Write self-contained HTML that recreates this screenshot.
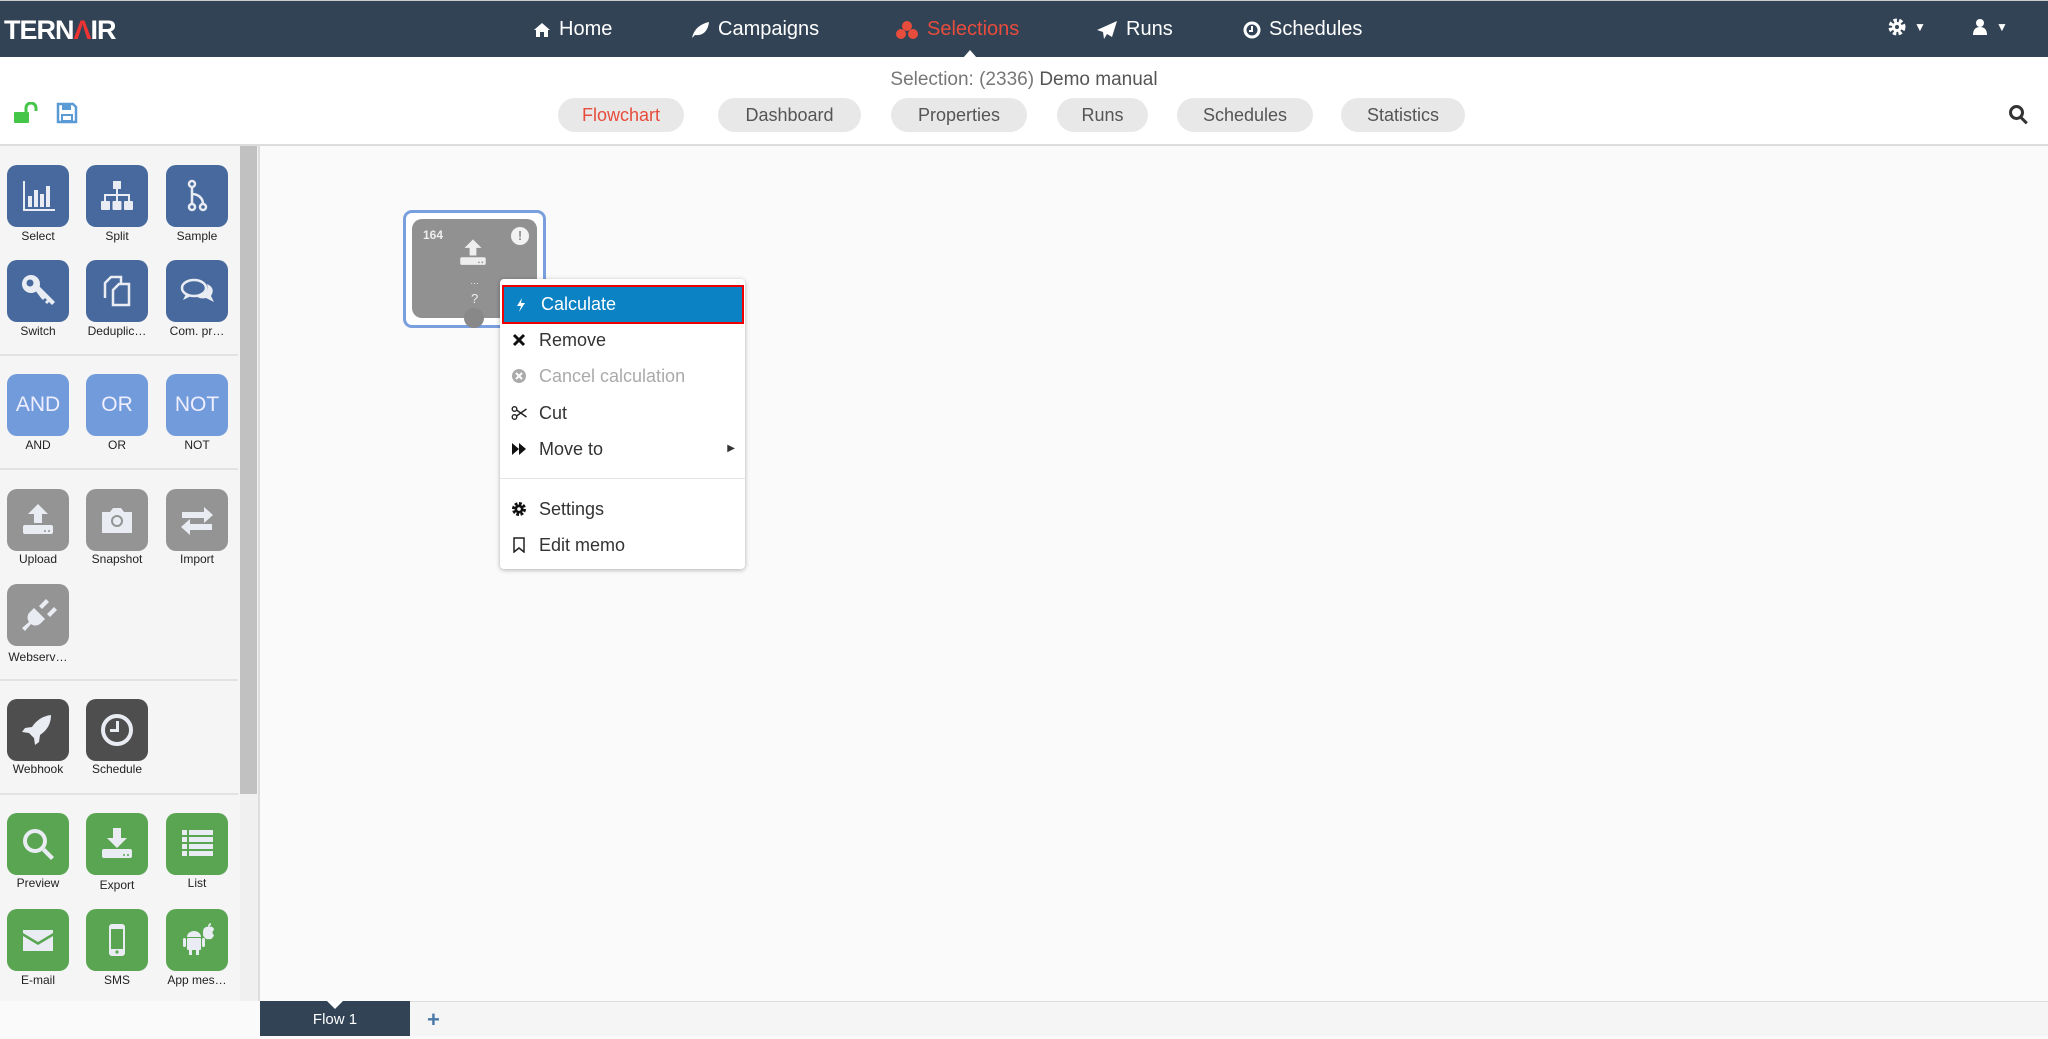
<!DOCTYPE html>
<html><head><meta charset="utf-8"><style>
*{box-sizing:border-box;margin:0;padding:0}
body{width:2048px;height:1036px;overflow:hidden;background:#fafafa;font-family:"Liberation Sans",sans-serif;position:relative}
.nav{position:absolute;left:0;top:0;width:2048px;height:57px;background:#314355;border-top:1px solid #ccc}
.nav .it{position:absolute;top:17px;color:#fff;font-size:20px;display:flex;align-items:center;gap:8px}
.logo{position:absolute;left:4px;top:14px;color:#fff;font-weight:bold;font-size:27px;letter-spacing:-1px}
.sub{position:absolute;left:0;top:57px;width:2048px;height:89px;background:#fff;border-bottom:2px solid #ddd}
.title{position:absolute;top:12px;left:0;width:2048px;text-align:center;font-size:19px;color:#777}
.title b{font-weight:normal;color:#555}
.pill{position:absolute;top:41px;height:34px;border-radius:17px;background:#e8e8e8;color:#555;font-size:18px;line-height:34px;text-align:center}
.side{position:absolute;left:0;top:146px;width:240px;height:855px;background:#f5f5f5}
.track{position:absolute;left:240px;top:146px;width:20px;height:855px;background:#f0f0f0;border-right:2px solid #ddd}
.thumb{position:absolute;left:240px;top:146px;width:17px;height:648px;background:#c1c1c1}
.t{position:absolute;width:62px;height:62px;border-radius:10px;display:flex;align-items:center;justify-content:center;color:#eef;font-size:21px}
.t svg{width:40px;height:40px;fill:#e9edf3;stroke:none}
.l{position:absolute;width:80px;text-align:center;font-size:12px;color:#222}
.sep{position:absolute;left:0;width:238px;height:2px;background:#e2e2e2}
.b{background:#47699d}.lb{background:#729bdb}.g{background:#949494}.d{background:#4e4e4e}.gr{background:#5aa552}
.menu{position:absolute;left:500px;top:279px;width:245px;height:290px;background:#fff;border-radius:4px;box-shadow:0 1px 5px rgba(0,0,0,.3)}
.mi{position:absolute;left:0;width:245px;height:36px;font-size:18px;color:#333;line-height:36px;padding-left:39px}
.mi svg{position:absolute;left:11px;top:10px;width:16px;height:16px}
</style></head><body>
<div class="nav">
<div class="logo">TERN<span style="color:#e33">Λ</span>IR</div>
<div class="it" style="left:533px"><svg width="18" height="16" viewBox="0 0 18 16"><path d="M9 1L1 8h2v7h4v-5h4v5h4V8h2z" fill="#fff"/></svg>Home</div>
<div class="it" style="left:690px"><svg width="20" height="18" viewBox="0 0 20 18"><path d="M2 17C4 8 10 3 19 1c-1 9-6 14-14 13l-3 3z" fill="#fff"/></svg>Campaigns</div>
<div class="it" style="left:895px;color:#e74c3c"><svg width="24" height="20" viewBox="0 0 24 20"><circle cx="12" cy="6" r="5" fill="#e74c3c"/><circle cx="6" cy="14" r="5" fill="#e74c3c"/><circle cx="18" cy="14" r="5" fill="#e74c3c"/></svg>Selections</div>
<div class="it" style="left:1096px"><svg width="22" height="20" viewBox="0 0 22 20"><path d="M21 1L1 10l6 2 1 7 3-5 5 3z" fill="#fff"/></svg>Runs</div>
<div class="it" style="left:1243px"><svg width="18" height="18" viewBox="0 0 18 18"><circle cx="9" cy="9" r="7" fill="none" stroke="#fff" stroke-width="3"/><path d="M9 5v5H6" stroke="#fff" stroke-width="2" fill="none"/></svg>Schedules</div>
<div class="it" style="left:1888px;font-size:12px"><svg width="18" height="18" viewBox="0 0 18 18"><circle cx="9" cy="9" r="6" fill="none" stroke="#fff" stroke-width="5" stroke-dasharray="3 2"/><circle cx="9" cy="9" r="5" fill="#fff"/><circle cx="9" cy="9" r="2" fill="#314355"/></svg>▼</div>
<div class="it" style="left:1972px;font-size:12px"><svg width="16" height="18" viewBox="0 0 16 18"><circle cx="8" cy="5" r="4" fill="#fff"/><path d="M1 17c0-6 3-8 7-8s7 2 7 8z" fill="#fff"/></svg>▼</div>
<div style="position:absolute;left:963px;top:49px;border-left:7px solid transparent;border-right:7px solid transparent;border-bottom:8px solid #fff"></div>
</div>
<div class="sub">
<div class="title">Selection: (2336) <b>Demo manual</b></div>
<svg style="position:absolute;left:12px;top:45px" width="28" height="22" viewBox="0 0 28 22"><rect x="2" y="10" width="15" height="11" rx="1" fill="#44c649"/><path d="M14 11V6a5 5 0 0 1 10 0v3" fill="none" stroke="#44c649" stroke-width="3"/></svg>
<svg style="position:absolute;left:56px;top:45px" width="22" height="22" viewBox="0 0 22 22"><path d="M2 2h15l3 3v15H2z" fill="none" stroke="#5b9bd5" stroke-width="2.5"/><rect x="6" y="3" width="9" height="5" fill="#5b9bd5"/><rect x="6" y="13" width="10" height="6" fill="none" stroke="#5b9bd5" stroke-width="2"/></svg>
<div class="pill" style="left:558px;width:126px;color:#e74c3c">Flowchart</div>
<div class="pill" style="left:718px;width:143px">Dashboard</div>
<div class="pill" style="left:891px;width:136px">Properties</div>
<div class="pill" style="left:1057px;width:91px">Runs</div>
<div class="pill" style="left:1177px;width:136px">Schedules</div>
<div class="pill" style="left:1341px;width:124px">Statistics</div>
<div style="position:absolute;left:2009px;top:48px;width:15px;height:15px;border:3px solid #333;border-radius:50%"></div>
<div style="position:absolute;left:2020px;top:62px;width:8px;height:3px;background:#333;transform:rotate(45deg)"></div>
</div>
<div class="side"></div><div class="track"></div><div class="thumb"></div>
<div class="t b" style="left:7px;top:165px"><svg viewBox="0 0 40 40"><path d="M5 5h2v28h30v2H5z"/><rect x="10" y="20" width="4" height="11"/><rect x="16" y="14" width="4" height="17"/><rect x="22" y="18" width="4" height="13"/><rect x="28" y="10" width="4" height="21"/></svg></div><div class="l" style="left:-2px;top:229px">Select</div>
<div class="t b" style="left:86px;top:165px"><svg viewBox="0 0 40 40"><rect x="16" y="5" width="8" height="8"/><rect x="19" y="13" width="2" height="6"/><rect x="7" y="18" width="26" height="2"/><rect x="7" y="18" width="2" height="7"/><rect x="31" y="18" width="2" height="7"/><rect x="19" y="18" width="2" height="7"/><rect x="4" y="25" width="9" height="9" rx="1"/><rect x="15.5" y="25" width="9" height="9" rx="1"/><rect x="27" y="25" width="9" height="9" rx="1"/></svg></div><div class="l" style="left:77px;top:229px">Split</div>
<div class="t b" style="left:166px;top:165px"><svg viewBox="0 0 40 40" fill="none"><g fill="none" stroke="#e9edf3" stroke-width="2.5"><circle cx="15" cy="8" r="3"/><circle cx="15" cy="31" r="3"/><circle cx="26" cy="31" r="3"/><path d="M15 11v17M15 18c6 0 11 4 11 10"/></g></svg></div><div class="l" style="left:157px;top:229px">Sample</div>
<div class="t b" style="left:7px;top:260px"><svg viewBox="0 0 40 40"><circle cx="13" cy="13" r="9"/><circle cx="12" cy="12" r="3.5" fill="#47699d"/><path d="M17 19l4-4 16 16-3 3-3-3-2 2-2-2 2-2-2-2-2 2-2-2z"/></svg></div><div class="l" style="left:-2px;top:324px">Switch</div>
<div class="t b" style="left:86px;top:260px"><svg viewBox="0 0 40 40"><g fill="none" stroke="#e9edf3" stroke-width="2.5"><path d="M8 27V12l6-6h10v6"/><path d="M16 34V19l6-6h10v21z"/></g></svg></div><div class="l" style="left:77px;top:324px">Deduplic…</div>
<div class="t b" style="left:166px;top:260px"><svg viewBox="0 0 40 40"><g fill="none" stroke="#e9edf3" stroke-width="2.5"><ellipse cx="17" cy="17" rx="12" ry="8"/></g><path d="M9 23l-3 6 8-4z"/><path d="M30 13c5 2 7 6 5 10l-1 2 3 6-8-4c-4 1-8 0-10-2 8 0 13-5 11-12z"/></svg></div><div class="l" style="left:157px;top:324px">Com. pr…</div>
<div class="sep" style="top:354px"></div>
<div class="t lb" style="left:7px;top:374px">AND</div><div class="l" style="left:-2px;top:438px">AND</div>
<div class="t lb" style="left:86px;top:374px">OR</div><div class="l" style="left:77px;top:438px">OR</div>
<div class="t lb" style="left:166px;top:374px">NOT</div><div class="l" style="left:157px;top:438px">NOT</div>
<div class="sep" style="top:468px"></div>
<div class="t g" style="left:7px;top:489px"><svg viewBox="0 0 40 40"><path d="M20 4l10 10h-6v9h-8v-9h-6z"/><rect x="5" y="25" width="30" height="9" rx="2"/><circle cx="27" cy="31" r="1" fill="#949494"/><circle cx="31" cy="31" r="1" fill="#949494"/></svg></div><div class="l" style="left:-2px;top:552px">Upload</div>
<div class="t g" style="left:86px;top:489px"><svg viewBox="0 0 40 40"><path d="M5 12h8l3-4h8l3 4h8v21H5z"/><circle cx="20" cy="21" r="6" fill="#949494"/><circle cx="20" cy="21" r="4"/></svg></div><div class="l" style="left:77px;top:552px">Snapshot</div>
<div class="t g" style="left:166px;top:489px"><svg viewBox="0 0 40 40"><path d="M5 12h22V7l9 8-9 8v-5H5z"/><path d="M35 24H13v-5l-9 8 9 8v-5h22z"/></svg></div><div class="l" style="left:157px;top:552px">Import</div>
<div class="t g" style="left:7px;top:584px"><svg viewBox="0 0 40 40"><path d="M28 4l-7 7 3 3 7-7zM36 12l-7 7 3 3 7-7z" /><path d="M16 13l11 11-5 5c-3 2-7 2-9 0l-6 7-3-3 7-6c-2-3-2-6 0-9z"/></svg></div><div class="l" style="left:-2px;top:650px">Webserv…</div>
<div class="sep" style="top:679px"></div>
<div class="t d" style="left:7px;top:699px"><svg viewBox="0 0 40 40"><path d="M33 5c-9 1-15 6-19 12l-7 1-3 4 7 1 5 5 1 7 4-3 1-7c6-4 11-10 11-20z"/></svg></div><div class="l" style="left:-2px;top:762px">Webhook</div>
<div class="t d" style="left:86px;top:699px"><svg viewBox="0 0 40 40"><circle cx="20" cy="20" r="14" fill="none" stroke="#e9edf3" stroke-width="4"/><path d="M19 11h3v11h-9v-3h6z"/></svg></div><div class="l" style="left:77px;top:762px">Schedule</div>
<div class="sep" style="top:793px"></div>
<div class="t gr" style="left:7px;top:813px"><svg viewBox="0 0 40 40"><circle cx="17" cy="17" r="10" fill="none" stroke="#e9edf3" stroke-width="4"/><path d="M24 27l3-3 9 9-3 3z"/></svg></div><div class="l" style="left:-2px;top:876px">Preview</div>
<div class="t gr" style="left:86px;top:813px"><svg viewBox="0 0 40 40"><path d="M16 4h8v10h6l-10 10-10-10h6z"/><rect x="5" y="25" width="30" height="9" rx="2"/><circle cx="27" cy="31" r="1" fill="#5aa552"/><circle cx="31" cy="31" r="1" fill="#5aa552"/></svg></div><div class="l" style="left:77px;top:878px">Export</div>
<div class="t gr" style="left:166px;top:813px"><svg viewBox="0 0 40 40"><rect x="5" y="6" width="5" height="5"/><rect x="12" y="6" width="24" height="5"/><rect x="5" y="13" width="5" height="5"/><rect x="12" y="13" width="24" height="5"/><rect x="5" y="20" width="5" height="5"/><rect x="12" y="20" width="24" height="5"/><rect x="5" y="27" width="5" height="5"/><rect x="12" y="27" width="24" height="5"/></svg></div><div class="l" style="left:157px;top:876px">List</div>
<div class="t gr" style="left:7px;top:909px"><svg viewBox="0 0 40 40"><path d="M5 10h30v3L20 22 5 13z"/><path d="M5 16l15 9 15-9v15H5z"/></svg></div><div class="l" style="left:-2px;top:973px">E-mail</div>
<div class="t gr" style="left:86px;top:909px"><svg viewBox="0 0 40 40"><rect x="12" y="4" width="16" height="32" rx="3"/><rect x="14" y="9" width="12" height="20" fill="#5aa552"/><circle cx="20" cy="32" r="1.6" fill="#5aa552"/></svg></div><div class="l" style="left:77px;top:973px">SMS</div>
<div class="t gr" style="left:166px;top:909px"><svg viewBox="0 0 40 40"><path d="M10 17a7 6 0 0 1 14 0z"/><rect x="10" y="18" width="14" height="12" rx="1"/><rect x="6" y="18" width="3" height="9" rx="1.5"/><rect x="25" y="18" width="3" height="9" rx="1.5"/><rect x="12" y="29" width="3" height="6"/><rect x="19" y="29" width="3" height="6"/><path d="M26 12c0-4 3-6 6-5 2-1 5 0 5 3-2 1-2 4 0 5-1 3-3 5-5 4-2 1-5-1-6-4z"/><path d="M31 7c0-2 1-4 3-4 0 2-1 4-3 4z"/></svg></div><div class="l" style="left:157px;top:973px">App mes…</div>
<div style="position:absolute;left:260px;top:1001px;width:1788px;height:35px;background:#f5f5f5;border-top:1px solid #ddd"></div>
<div style="position:absolute;left:260px;top:1001px;width:150px;height:35px;background:#314355;color:#fff;font-size:15px;text-align:center;line-height:38px">Flow 1</div>
<div style="position:absolute;left:327px;top:1001px;border-left:8px solid transparent;border-right:8px solid transparent;border-top:8px solid #fff"></div>
<div style="position:absolute;left:427px;top:1007px;color:#4a7aa8;font-size:22px;font-weight:bold">+</div>
<div style="position:absolute;left:403px;top:210px;width:143px;height:118px;border:3px solid #7a9fdf;border-radius:9px;background:#fff"></div>
<div style="position:absolute;left:412px;top:219px;width:125px;height:99px;border-radius:10px;background:#919191;color:#eee">
<div style="position:absolute;left:11px;top:9px;font-size:12px;font-weight:bold">164</div>
<div style="position:absolute;right:8px;top:8px;width:18px;height:18px;border-radius:50%;background:#f2f2f2;color:#919191;font-size:13px;font-weight:bold;text-align:center;line-height:18px">!</div>
<svg style="position:absolute;left:44px;top:17px" width="34" height="34" viewBox="0 0 40 40"><path d="M20 4l10 10h-6v9h-8v-9h-6z" fill="#eee"/><rect x="5" y="25" width="30" height="9" rx="2" fill="#eee"/><circle cx="27" cy="31" r="1" fill="#919191"/><circle cx="31" cy="31" r="1" fill="#919191"/></svg>
<div style="position:absolute;left:58px;top:57px;font-size:9px">…</div>
<div style="position:absolute;left:59px;top:72px;font-size:13px">?</div>
</div>
<div style="position:absolute;left:464px;top:308px;width:20px;height:20px;border-radius:50%;background:#888"></div>
<div class="menu">
<div class="mi" style="top:6px;background:#0a82c4;color:#fff;border:2px solid #e00;left:2px;width:242px;height:39px;line-height:35px;padding-left:37px">
<svg viewBox="0 0 16 16" style="left:9px;top:10px"><path d="M9 1L4 9h4l-2 6 6-9H8z" fill="#fff"/></svg>Calculate</div>
<div class="mi" style="top:43px"><svg viewBox="0 0 16 16"><path d="M3 3l10 10M13 3L3 13" stroke="#111" stroke-width="3"/></svg>Remove</div>
<div class="mi" style="top:79px;color:#aaa"><svg viewBox="0 0 16 16"><circle cx="8" cy="8" r="7" fill="#aaa"/><path d="M5 5l6 6M11 5l-6 6" stroke="#fff" stroke-width="2"/></svg>Cancel calculation</div>
<div class="mi" style="top:116px"><svg viewBox="0 0 16 16" fill="none" stroke="#222" stroke-width="1.4"><circle cx="3.5" cy="4" r="2.3"/><circle cx="3.5" cy="12" r="2.3"/><path d="M5.5 5l10 7M5.5 11l10-7"/></svg>Cut</div>
<div class="mi" style="top:152px"><svg viewBox="0 0 16 16"><path d="M1 2l7 6-7 6zM8 2l7 6-7 6z" fill="#111"/></svg>Move to<span style="position:absolute;right:10px;font-size:10px">▶</span></div>
<div style="position:absolute;left:0;top:199px;width:245px;height:1px;background:#e5e5e5"></div>
<div class="mi" style="top:212px"><svg viewBox="0 0 16 16"><circle cx="8" cy="8" r="5" fill="none" stroke="#111" stroke-width="4" stroke-dasharray="2.5 1.4"/><circle cx="8" cy="8" r="4.5" fill="#111"/><circle cx="8" cy="8" r="1.8" fill="#fff"/></svg>Settings</div>
<div class="mi" style="top:248px"><svg viewBox="0 0 16 16"><path d="M3 1h10v14l-5-4-5 4z" fill="none" stroke="#222" stroke-width="1.5"/></svg>Edit memo</div>
</div>
</body></html>
